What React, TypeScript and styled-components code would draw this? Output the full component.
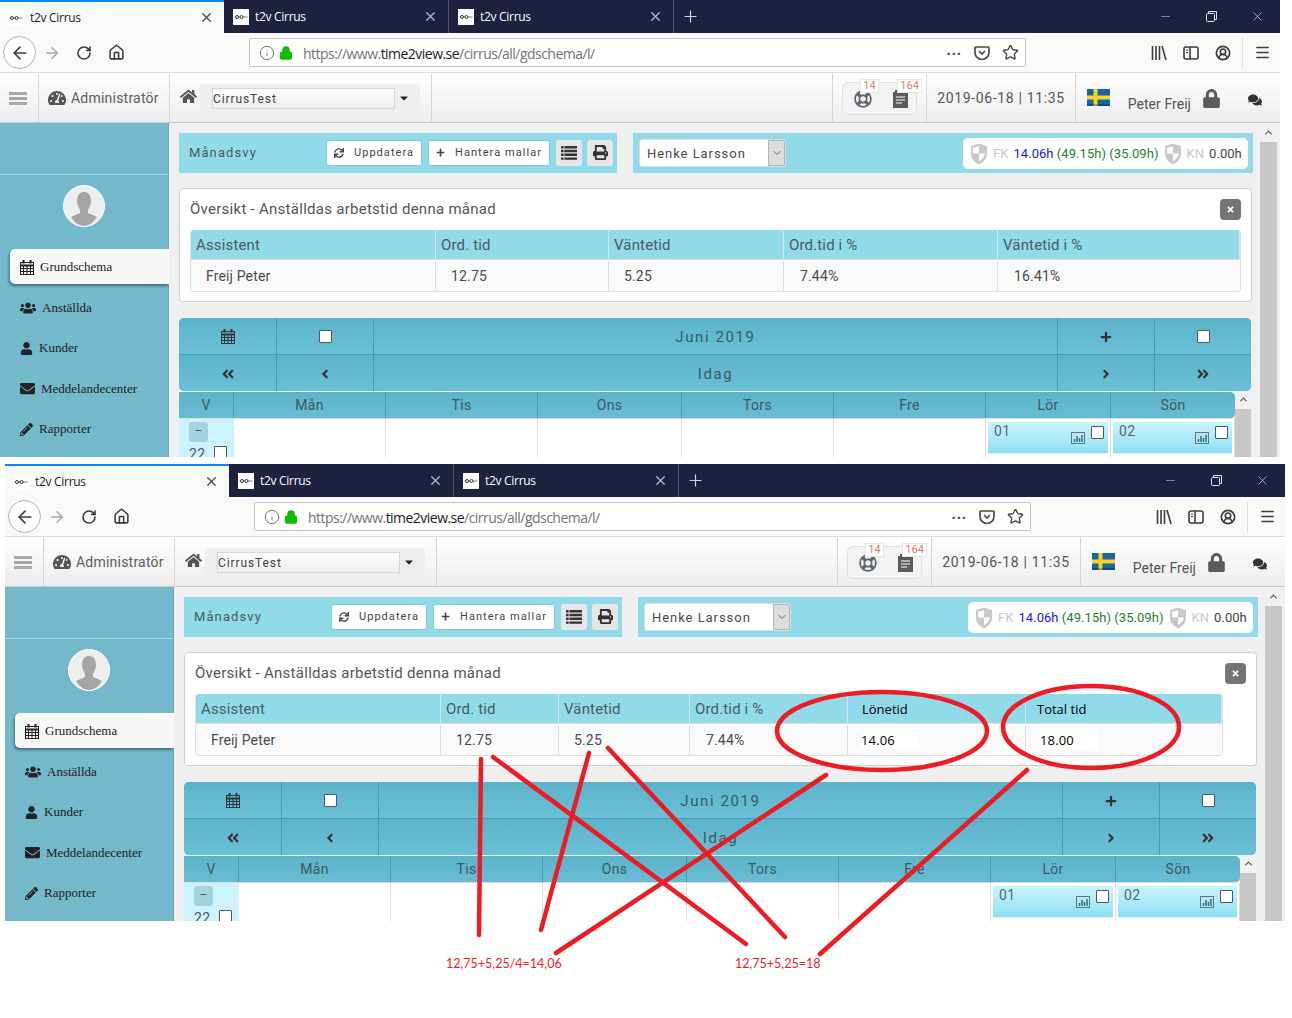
import React from "react";
import styled, { createGlobalStyle } from "styled-components";
import {
  FaAngleDoubleLeft, FaAngleDoubleRight, FaAngleLeft, FaAngleRight, FaCaretDown,
  FaComments, FaEnvelope, FaHome, FaLock, FaPencilAlt, FaPlus, FaPrint, FaRegLifeRing, FaSync,
  FaTachometerAlt, FaTimes, FaUser, FaUsers,
} from "react-icons/fa";
import {
  ArrowLeft, ArrowRight, ChevronDown, ChevronUp, CircleUserRound, Home, Info, Lock, Menu, Minus, Plus,
  RotateCw, Star, X,
} from "lucide-react";

const Global = createGlobalStyle`
  html, body { margin: 0; padding: 0; background: #fff; }
  body { font-family: Roboto, "Liberation Sans", sans-serif; }
  #root { position: relative; height: 1018px; overflow: hidden; }
  * { box-sizing: border-box; }
`;

const Shot = styled.div<{ $second?: boolean }>`
  width: 1280px;
  height: 457px;
  overflow: hidden;
  margin-left: ${(p) => (p.$second ? 5 : 0)}px;
  margin-top: ${(p) => (p.$second ? 7 : 0)}px;
  background: #fff;
`;

/* Browser chrome */
const TabBar = styled.div`
  display: flex;
  align-items: stretch;
  height: 33px;
  background: #1e2140;
  color: #fff;
`;
const Tab = styled.div<{ $active?: boolean }>`
  width: ${(p) => (p.$active ? 224 : 225)}px;
  display: flex;
  align-items: center;
  gap: 6px;
  padding: ${(p) => (p.$active ? "0 10px 0 8px" : "0 10px 0 9px")};
  font: 12px "Open Sans", "Liberation Sans", sans-serif;
  letter-spacing: -0.3px;
  color: ${(p) => (p.$active ? "#1a1a1a" : "#fff")};
  background: ${(p) => (p.$active ? "#f9f9fa" : "transparent")};
  border-top: ${(p) => (p.$active ? "2px solid #0a84ff" : "none")};
  border-right: ${(p) => (p.$active ? "none" : "1px solid #50536a")};
`;
const TabTitle = styled.span`
  flex: 1;
`;
const NewTab = styled.div`
  width: 32px;
  display: flex;
  align-items: center;
  justify-content: center;
  color: #d4d4da;
`;
const WinControls = styled.div`
  margin-left: auto;
  display: flex;
  align-items: center;
  color: #e6e6ea;
`;
const WinButton = styled.div`
  width: 46px;
  display: flex;
  justify-content: center;
`;
const NavBar = styled.div`
  height: 40px;
  display: flex;
  align-items: center;
  background: #f9f9fa;
  border-bottom: 1px solid #dcdcdf;
  color: #3d3d40;
`;
const BackCircle = styled.div`
  width: 33px;
  height: 33px;
  margin-left: 3px;
  border: 1px solid #b1b1b3;
  border-radius: 50%;
  background: #fff;
  display: flex;
  align-items: center;
  justify-content: center;
`;
const NavIcon = styled.div<{ $dim?: boolean; $w?: number }>`
  width: ${(p) => p.$w ?? 32}px;
  display: flex;
  justify-content: center;
  color: ${(p) => (p.$dim ? "#a8a8aa" : "#3d3d40")};
`;
const UrlBar = styled.div`
  width: 777px;
  height: 29px;
  margin-left: 117px;
  margin-right: 117px;
  background: #fff;
  border: 1px solid #c4c4c6;
  border-radius: 2px;
  display: flex;
  align-items: center;
  padding: 0 6px 0 9px;
  font: 14px "Open Sans", "Liberation Sans", sans-serif;
  letter-spacing: -0.53px;
  color: #737373;
`;
const UrlLock = styled.div`
  margin: 0 10px 0 4px;
  display: flex;
  color: #12bc00;
`;
const UrlText = styled.span`
  margin-top: 2px;
`;
const UrlHost = styled.span`
  color: #1a1a1a;
`;
const UrlIcons = styled.div`
  margin-left: auto;
  display: flex;
  align-items: center;
  gap: 12px;
  color: #4a4a4d;
`;
const Dots = styled.span`
  font: bold 15px "Liberation Sans", sans-serif;
  letter-spacing: 1px;
  line-height: 10px;
  margin-top: -6px;
`;
const NavDivider = styled.div`
  width: 1px;
  height: 30px;
  background: #dcdcdf;
  margin: 0 3px;
`;

/* App header */
const AppHeader = styled.div`
  height: 50px;
  padding-top: 1px;
  display: flex;
  background: linear-gradient(#ffffff, #ececec);
  border-bottom: 1px solid #c8c8c8;
  color: #555;
`;
const HeadSection = styled.div<{ $w?: number; $right?: boolean; $pad?: number }>`
  ${(p) => (p.$w ? `width: ${p.$w}px;` : "")}
  padding-left: ${(p) => p.$pad ?? 0}px;
  display: flex;
  align-items: center;
  border-right: 1px solid #d5d5d5;
  ${(p) => (p.$right ? "border-left: 1px solid #d5d5d5; border-right: none;" : "")}
`;
const Hamburger = styled.div`
  width: 18px;
  height: 13px;
  margin-left: 9px;
  border-top: 3px solid #a5a9ae;
  border-bottom: 3px solid #a5a9ae;
  position: relative;
  &::after {
    content: "";
    position: absolute;
    left: 0;
    right: 0;
    top: 2px;
    height: 3px;
    background: #a5a9ae;
  }
`;
const RoleLabel = styled.span`
  font-size: 14px;
  letter-spacing: 0.22px;
  margin-left: 5px;
  color: #5e5e5e;
`;
const HomeGlyph = styled.span`
  display: flex;
  margin-top: -4px;
  color: #555;
`;
const SelectWrap = styled.div`
  width: 220px;
  height: 28px;
  margin-left: 3px;
  background: #eeeeee;
  border-radius: 4px;
  display: flex;
  align-items: center;
  padding: 0 10px 0 12px;
  justify-content: space-between;
`;
const SelectBox = styled.div`
  width: 183px;
  height: 21px;
  background: linear-gradient(#fff, #ededed);
  border: 1px solid #d5d5d5;
  font-size: 12px;
  letter-spacing: 0.9px;
  line-height: 20px;
  color: #444;
`;
const Spacer = styled.div`
  flex: 1;
`;
const AlertBox = styled.div`
  position: relative;
  width: 75px;
  height: 33px;
  margin: 0 9px;
  border: 1px solid #dfdfdf;
  border-radius: 6px;
  background: #f3f3f3;
  display: flex;
  align-items: center;
  padding: 2px 0 0 11px;
  gap: 21px;
  color: #5f6870;
`;
const Badge = styled.span<{ $left: number }>`
  position: absolute;
  top: -4px;
  left: ${(p) => p.$left}px;
  height: 14px;
  padding: 0 2px;
  background: #fff;
  border: 1px solid #e4e4e4;
  font-size: 11px;
  line-height: 12px;
  color: #d97e72;
`;
const DateText = styled.span`
  font-size: 14px;
  letter-spacing: 0.64px;
  padding: 0 10px;
  color: #555;
  margin-top: -1px;
`;
const UserName = styled.span`
  font-size: 14px;
  letter-spacing: 0.05px;
  margin: 12px 11px 0 18px;
  color: #555;
`;
const LockIcon = styled.div`
  display: flex;
  margin-top: 0;
  color: #5b5b5b;
`;
const ChatIcon = styled.div`
  display: flex;
  margin: 4px 18px 0 27px;
  color: #333;
`;

/* Body */
const Body = styled.div`
  display: grid;
  grid-template-columns: 169px 1fr;
  height: 400px;
`;
const Sidebar = styled.div`
  background: #74b8cb;
  height: 100%;
  border-right: 1px solid #6aa9bb;
`;
const SideTop = styled.div`
  height: 52px;
  border-bottom: 1px solid #a4dbe8;
`;
const AvatarWrap = styled.div`
  display: flex;
  justify-content: center;
  padding: 10px 0 22px;
  height: 74px;
`;
const Avatar = styled.svg`
  width: 42px;
  height: 42px;
  display: block;
`;
const SideItem = styled.div<{ $active?: boolean }>`
  height: 35px;
  margin: 0 0 5.5px 10px;
  padding: 1px 0 0 10px;
  display: flex;
  align-items: center;
  gap: 6px;
  font: 13px "Liberation Serif", serif;
  color: #222;
  ${(p) =>
    p.$active
      ? `background: #f8f8f8; border-radius: 5px 0 0 5px; box-shadow: -1px 2px 3px #3a6f80; margin-right: -1px;`
      : ""}
`;
const Main = styled.div`
  display: flex;
  background: #efefef;
  height: 100%;
`;
const Content = styled.div`
  width: 1091px;
  padding: 10px 8px 0 10px;
`;
const ToolRow = styled.div`
  display: flex;
  gap: 16px;
  margin-right: -1px;
`;
const Toolbar = styled.div<{ $w: number }>`
  width: ${(p) => p.$w}px;
  height: 40px;
  background: #90daea;
  display: flex;
  align-items: center;
  padding: 0 0 0 6px;
`;
const ViewTitle = styled.span`
  flex: none;
  margin: -2px 0 0 4px;
  font-size: 13px;
  letter-spacing: 1.1px;
  color: #4a5a60;
  width: 137px;
`;
const ToolButton = styled.div<{ $w: number }>`
  flex: none;
  width: ${(p) => p.$w}px;
  height: 26px;
  margin: -1px 6px 0 0;
  background: #fff;
  border: 1px solid #7fd0cf;
  border-radius: 3px;
  display: flex;
  align-items: center;
  justify-content: center;
  gap: 10px;
  font-size: 11px;
  letter-spacing: 1.05px;
  color: #444;
`;
const IconButton = styled.div`
  flex: none;
  width: 26px;
  height: 26px;
  margin: -1px 5px 0 0;
  background: #e6e6e6;
  border-radius: 3px;
  display: flex;
  align-items: center;
  justify-content: center;
  color: #333;
`;
const PersonSelect = styled.div`
  width: 147px;
  height: 28px;
  background: #fff;
  border: 1px solid #dcdcdc;
  border-radius: 3px;
  display: flex;
  align-items: center;
  justify-content: space-between;
  padding-left: 7px;
  font-size: 13px;
  letter-spacing: 0.95px;
  color: #4a4a4a;
`;
const SelectArrow = styled.div`
  width: 17px;
  height: 100%;
  background: #dcdcdc;
  border: 1px solid #b5b5b5;
  border-radius: 0 2px 2px 0;
  display: flex;
  align-items: center;
  justify-content: center;
  color: #666;
`;
const StatsPill = styled.div`
  margin: 1px 5px 0 auto;
  width: 285px;
  height: 31px;
  background: #fff;
  border-radius: 5px;
  display: flex;
  align-items: center;
  padding-left: 7px;
  gap: 5px;
  font-size: 13px;
  letter-spacing: 0.05px;
  color: #444;
  white-space: nowrap;
`;
const StatDim = styled.span`
  color: #c8c8c8;
`;
const StatBlue = styled.span`
  color: #1a1ae0;
`;
const StatGreen = styled.span`
  color: #1e7f2f;
`;
const Panel = styled.div`
  margin-top: 15px;
  height: 114px;
  background: #fff;
  border: 1px solid #cfcfcf;
  border-radius: 4px;
  padding: 10px 10px 0;
`;
const PanelHead = styled.div`
  height: 31px;
  display: flex;
  justify-content: space-between;
  font-size: 15px;
  letter-spacing: 0.27px;
  color: #555;
  line-height: 20px;
`;
const CloseBtn = styled.div`
  width: 21px;
  height: 21px;
  background: #757575;
  border-radius: 4px;
  color: #fff;
  display: flex;
  align-items: center;
  justify-content: center;
`;
const DataTable = styled.div<{ $cols: string; $w: number }>`
  width: ${(p) => p.$w}px;
  display: grid;
  grid-template-columns: ${(p) => p.$cols};
  grid-template-rows: 30px 31px;
  border-radius: 4px;
  overflow: hidden;
  border: 1px solid #dedede;
  border-top: none;
`;
const HeadCell = styled.div<{ $pad?: number; $edited?: boolean }>`
  background: #90daea;
  border-right: 1px solid #cfe6ea;
  padding-left: ${(p) => p.$pad ?? 5}px;
  font: ${(p) => (p.$edited ? `13px "Open Sans"` : "15px Roboto")}, sans-serif;
  color: ${(p) => (p.$edited ? "#000" : "#4a5a60")};
  line-height: 30px;
  letter-spacing: ${(p) => (p.$edited ? "0" : "0.15px")};
  border-bottom: 1px solid #dedede;
  &:last-child { border-right: none; }
`;
const BodyCell = styled.div<{ $pad?: number; $edited?: boolean }>`
  background: #fafafa;
  border-right: 1px solid #dedede;
  padding-left: ${(p) => p.$pad ?? 15}px;
  font: ${(p) => (p.$edited ? `13px "Open Sans"` : "14px Roboto")}, sans-serif;
  color: ${(p) => (p.$edited ? "#000" : "#4a4a4a")};
  line-height: 32px;
  letter-spacing: 0.15px;
  &:last-child { border-right: none; }
`;
const EditedValue = styled.span`
  display: inline-block;
  width: 58px;
  line-height: 18px;
  margin-top: 1px;
  background: #fff;
`;
const Calendar = styled.div`
  margin-top: 16px;
  width: 1072px;
`;
const CalNav = styled.div`
  display: grid;
  grid-template-columns: 98px 97px 684px 97px 96px;
  grid-template-rows: 37px 36px;
  border-radius: 5px;
  overflow: hidden;
  background: #64b9cf;
`;
const NavCell = styled.div<{ $row2?: boolean; $last?: boolean }>`
  display: flex;
  align-items: center;
  justify-content: center;
  padding-top: 1px;
  background: linear-gradient(#5bb3ca, #6ac0d6);
  border-right: ${(p) => (p.$last ? "none" : "1px solid #4a9bb0")};
  border-bottom: ${(p) => (p.$row2 ? "none" : "1px solid #4a9bb0")};
  font-size: 15px;
  letter-spacing: 1.6px;
  color: #3f5a63;
`;
const IconInk = styled.span`
  display: flex;
  color: #333;
`;
const Check = styled.span<{ $s?: number }>`
  display: block;
  width: ${(p) => p.$s ?? 13}px;
  height: ${(p) => p.$s ?? 13}px;
  background: #fff;
  border: 1px solid #555;
  border-radius: 1px;
`;
const CalLower = styled.div`
  display: flex;
  margin-top: 1px;
`;
const CalGridWrap = styled.div`
  width: 1056px;
`;
const WEEK_COLS = "55px 152px 152px 144px 152px 152px 125px 124px";
const DayHead = styled.div`
  display: grid;
  grid-template-columns: ${WEEK_COLS};
  height: 27px;
  border-radius: 0 5px 5px 0;
  overflow: hidden;
  border-bottom: 1px solid #dcdcdc;
`;
const DayCell = styled.div`
  background: linear-gradient(#5bb3ca, #67bcd3);
  border-right: 1px solid #4a9bb0;
  text-align: center;
  font-size: 14px;
  line-height: 26px;
  letter-spacing: 0.3px;
  color: #3f5a63;
  &:last-child { border-right: none; }
`;
const WeekRow = styled.div`
  display: grid;
  grid-template-columns: ${WEEK_COLS};
  height: 60px;
`;
const WeekCell = styled.div`
  background: #fff;
  border-right: 1px solid #dcdcdc;
`;
const WeekNoCell = styled.div`
  background: #cdf3fe;
  padding: 3px 0 0 10px;
`;
const Collapse = styled.div`
  width: 19px;
  height: 20px;
  background: #a4d3e0;
  border-radius: 3px;
  text-align: center;
  line-height: 19px;
  font-size: 12px;
  color: #555;
`;
const WeekNo = styled.div`
  display: flex;
  align-items: flex-start;
  gap: 8px;
  margin-top: 4px;
  font-size: 14px;
  letter-spacing: 0.5px;
  color: #4a5a60;
`;
const DayBox = styled.div`
  position: relative;
  margin: 3px 2px 0 2px;
  height: 32px;
  background: linear-gradient(#ccf4ff, #8fdff4);
  border-bottom: 1px solid #dff5fb;
  padding: 1px 0 0 6px;
  font-size: 14px;
  letter-spacing: 0.5px;
  color: #4f6b75;
`;
const DayIcon = styled.svg`
  position: absolute;
  right: 23px;
  top: 10px;
  width: 14px;
  height: 12px;
`;
const DayCheck = styled.span`
  position: absolute;
  right: 4px;
  top: 4px;
`;
const Scroll = styled.div<{ $w: number; $thumbTop: number; $thumbW: number }>`
  width: ${(p) => p.$w}px;
  background: #f0f0f0;
  position: relative;
  display: flex;
  justify-content: center;
  color: #555;
  padding-top: ${(p) => p.$thumbTop - 15}px;
  &::after {
    content: "";
    position: absolute;
    top: ${(p) => p.$thumbTop}px;
    bottom: 0;
    left: 0;
    width: ${(p) => p.$thumbW}px;
    background: #c8c8c8;
  }
`;
const ScrollArrow = styled.span<{ $shift?: number }>`
  display: flex;
  margin-right: ${(p) => p.$shift ?? 0}px;
`;
const Overlay = styled.svg`
  position: absolute;
  inset: 0;
  width: 1292px;
  height: 1018px;
  pointer-events: none;
`;
const Note = styled.span<{ $x: number }>`
  position: absolute;
  left: ${(p) => p.$x}px;
  top: 956px;
  font: 12.5px Lato, sans-serif;
  color: #ed1c24;
  line-height: 16px;
`;
const FlagMark = styled.svg`
  margin: -2px 0 0 11px;
`;

const Favicon = () => (
  <svg width="20" height="20" viewBox="0 0 20 20" style={{ margin: "0 -2px" }}>
    <rect x="2" y="2" width="16" height="16" fill="#fff" />
    <path d="M3.500 10h13" stroke="#555" strokeWidth=".8" />
    <rect x="4.500" y="8.500" width="3" height="3" rx="1.500" fill="#fff" stroke="#333" />
    <rect x="9" y="8.500" width="3" height="3" rx="1.500" fill="#fff" stroke="#333" />
  </svg>
);
const Flag = () => (
  <FlagMark width="23" height="17" viewBox="0 0 23 17">
    <rect width="23" height="17" fill="#1565a8" />
    <rect x="6.500" width="4" height="17" fill="#f5d327" />
    <rect y="6.500" width="23" height="4" fill="#f5d327" />
    <rect y="15" width="23" height="2" fill="#000" opacity=".25" />
  </FlagMark>
);
const Shield = () => (
  <svg width="18" height="22" viewBox="0 0 18 22">
    <path d="M9 0.500 1 3v8c0 5 4 8.500 8 10.500 4-2 8-5.500 8-10.500V3z" fill="#c9c9c9" />
    <path d="M9 3.500v7H3.200V4.500zM9 10.500h5.800c-.3 3.500-2.900 6-5.800 7.700z" fill="#fff" />
  </svg>
);
const PocketIcon = () => (
  <svg width="16" height="16" viewBox="0 0 16 16" fill="none" stroke="#4a4a4d" strokeWidth="1.700">
    <path d="M2 2h12a1 1 0 0 1 1 1v4.500a7 7 0 0 1-14 0V3a1 1 0 0 1 1-1z" />
    <path d="M5 6l3 3 3-3" />
  </svg>
);
const LibraryIcon = () => (
  <svg width="16" height="16" viewBox="0 0 16 16" stroke="#3d3d40" strokeWidth="1.600" fill="none">
    <path d="M1.500 1v14M5 1v14M8.500 1v14M11 1l4 14" />
  </svg>
);
const SidebarIcon = () => (
  <svg width="16" height="16" viewBox="0 0 16 16" stroke="#3d3d40" strokeWidth="1.600" fill="none">
    <rect x="1" y="2" width="14" height="12" rx="2" />
    <path d="M7 2v12" />
    <path d="M3 5h2M3 7.500h2" strokeWidth="1" />
  </svg>
);
const RestoreIcon = () => (
  <svg width="11" height="11" viewBox="0 0 11 11" stroke="#e6e6ea" fill="none">
    <rect x=".5" y="2.500" width="8" height="8" rx="1" />
    <path d="M2.500 2.500V.5h8v8H8.500" />
  </svg>
);
const NotesIcon = () => (
  <svg width="15" height="18" viewBox="0 0 15 18">
    <path d="M0 2h2V0h2v2h2V0h2v2h2V0h2v2h3v16H0z" fill="#5b5b5b" />
    <path d="M3 7h9M3 10h9M3 13h6" stroke="#fff" />
  </svg>
);
const CalendarIcon = () => (
  <svg width="14" height="15" viewBox="0 0 14 15" fill="none" stroke="currentColor">
    <rect x=".5" y="2.500" width="13" height="12" fill="none" />
    <path d="M.5 5.500h13" strokeWidth="2" />
    <path d="M.5 8.500h13M.5 11.500h13M3.500 5v10M7 5v10M10.500 5v10" />
    <path d="M3.500 0v3.500M10.500 0v3.500" strokeWidth="2" />
  </svg>
);
const ListIcon = () => (
  <svg width="16" height="14" viewBox="0 0 16 14" fill="currentColor">
    <path d="M0 0h16v2.400H0zM0 3.800h16v2.400H0zM0 7.600h16V10H0zM0 11.400h16v2.400H0z" />
    <path d="M3 0v14" stroke="#e6e6e6" strokeWidth=".8" />
  </svg>
);
const ChartBox = () => (
  <DayIcon viewBox="0 0 14 12">
    <rect x=".5" y=".5" width="13" height="11" fill="#b9e6f2" stroke="#4d7f90" />
    <path d="M3.500 10V7M6 10V4M8.500 10V6M11 10V3" stroke="#2f6d82" strokeWidth="1.500" />
  </DayIcon>
);

type Col = { head: string; value: string; headPad?: number; pad?: number; edited?: boolean };

const SIDE_ITEMS: [React.ReactNode, string][] = [
  [<FaUsers size={16} />, "Anställda"],
  [<FaUser size={13} />, "Kunder"],
  [<FaEnvelope size={15} />, "Meddelandecenter"],
  [<FaPencilAlt size={13} />, "Rapporter"],
];
const DAYS = ["V", "Mån", "Tis", "Ons", "Tors", "Fre", "Lör", "Sön"];

const Window = ({ second, cols, template, width }: { second?: boolean; cols: Col[]; template: string; width: number }) => (
  <Shot $second={second}>
    <TabBar>
      <Tab $active>
        <Favicon />
        <TabTitle>t2v Cirrus</TabTitle>
        <X size={15} color="#4a4a4d" />
      </Tab>
      <Tab>
        <Favicon />
        <TabTitle>t2v Cirrus</TabTitle>
        <X size={15} color="#b8b8c0" />
      </Tab>
      <Tab>
        <Favicon />
        <TabTitle>t2v Cirrus</TabTitle>
        <X size={15} color="#b8b8c0" />
      </Tab>
      <NewTab><Plus size={19} strokeWidth={1.5} /></NewTab>
      <WinControls>
        <WinButton><Minus size={13} strokeWidth={1} /></WinButton>
        <WinButton><RestoreIcon /></WinButton>
        <WinButton><X size={15} strokeWidth={1} /></WinButton>
      </WinControls>
    </TabBar>
    <NavBar>
      <BackCircle><ArrowLeft size={20} strokeWidth={2} /></BackCircle>
      <NavIcon $dim><ArrowRight size={18} /></NavIcon>
      <NavIcon><RotateCw size={16} strokeWidth={2.4} /></NavIcon>
      <NavIcon><Home size={17} strokeWidth={2.2} /></NavIcon>
      <UrlBar>
        <Info size={16} strokeWidth={1.5} />
        <UrlLock><Lock size={14} strokeWidth={3} fill="#12bc00" /></UrlLock>
        <UrlText>https://www.<UrlHost>time2view.se</UrlHost>/cirrus/all/gdschema/l/</UrlText>
        <UrlIcons>
          <Dots>...</Dots>
          <PocketIcon />
          <Star size={17} strokeWidth={2} />
        </UrlIcons>
      </UrlBar>
      <NavIcon $w={32}><LibraryIcon /></NavIcon>
      <NavIcon $w={32}><SidebarIcon /></NavIcon>
      <NavIcon $w={32}><CircleUserRound size={16} strokeWidth={2.5} /></NavIcon>
      <NavDivider />
      <NavIcon $w={32}><Menu size={17} strokeWidth={2} /></NavIcon>
    </NavBar>
    <AppHeader>
      <HeadSection $w={39}><Hamburger /></HeadSection>
      <HeadSection $w={131} $pad={9}>
        <FaTachometerAlt size={18} color="#555" />
        <RoleLabel>Administratör</RoleLabel>
      </HeadSection>
      <HeadSection $w={262} $pad={10}>
        <HomeGlyph><FaHome size={17} /></HomeGlyph>
        <SelectWrap>
          <SelectBox>CirrusTest</SelectBox>
          <FaCaretDown size={12} color="#222" />
        </SelectWrap>
      </HeadSection>
      <Spacer />
      <HeadSection $right>
        <AlertBox>
          <FaRegLifeRing size={18} />
          <NotesIcon />
          <Badge $left={17}>14</Badge>
          <Badge $left={54}>164</Badge>
        </AlertBox>
      </HeadSection>
      <HeadSection $right><DateText>2019-06-18 | 11:35</DateText></HeadSection>
      <HeadSection $right>
        <Flag />
        <UserName>Peter Freij</UserName>
        <LockIcon><FaLock size={19} /></LockIcon>
        <ChatIcon><FaComments size={14} /></ChatIcon>
      </HeadSection>
    </AppHeader>
    <Body>
      <Sidebar>
        <SideTop />
        <AvatarWrap>
          <Avatar viewBox="0 0 42 42">
            <circle cx="21" cy="21" r="20.500" fill="#eee" stroke="#fff" />
            <path d="M21 7c5 0 7 4 7 9 0 4-2 7-3 9v3l9 4c-3 5-8 9-13 9s-10-4-13-9l9-4v-3c-1-2-3-5-3-9 0-5 2-9 7-9z" fill="#a5a5a5" />
          </Avatar>
        </AvatarWrap>
        <SideItem $active><CalendarIcon />Grundschema</SideItem>
        {SIDE_ITEMS.map(([icon, label]) => (
          <SideItem key={label}>{icon}{label}</SideItem>
        ))}
      </Sidebar>
      <Main>
        <Content>
          <ToolRow>
            <Toolbar $w={438}>
              <ViewTitle>Månadsvy</ViewTitle>
              <ToolButton $w={96}><FaSync size={10} />Uppdatera</ToolButton>
              <ToolButton $w={122}><FaPlus size={9} />Hantera mallar</ToolButton>
              <IconButton><ListIcon /></IconButton>
              <IconButton><FaPrint size={15} /></IconButton>
            </Toolbar>
            <Toolbar $w={620}>
              <PersonSelect>
                Henke Larsson
                <SelectArrow><ChevronDown size={12} /></SelectArrow>
              </PersonSelect>
              <StatsPill>
                <Shield />
                <StatDim>FK</StatDim>
                <span><StatBlue>14.06h</StatBlue> <StatGreen>(49.15h) (35.09h)</StatGreen></span>
                <Shield />
                <StatDim>KN</StatDim>
                <span>0.00h</span>
              </StatsPill>
            </Toolbar>
          </ToolRow>
          <Panel>
            <PanelHead>
              <span>Översikt - Anställdas arbetstid denna månad</span>
              <CloseBtn><FaTimes size={9} /></CloseBtn>
            </PanelHead>
            <DataTable $cols={template} $w={width}>
              {cols.map((c) => (
                <HeadCell key={c.head} $pad={c.headPad} $edited={c.edited}>{c.head}</HeadCell>
              ))}
              {cols.map((c) => (
                <BodyCell key={c.head} $pad={c.pad} $edited={c.edited}>
                  {c.edited ? <EditedValue>{c.value}</EditedValue> : c.value}
                </BodyCell>
              ))}
            </DataTable>
          </Panel>
          <Calendar>
            <CalNav>
              <NavCell><IconInk><CalendarIcon /></IconInk></NavCell>
              <NavCell><Check /></NavCell>
              <NavCell>Juni 2019</NavCell>
              <NavCell><IconInk><FaPlus size={12} /></IconInk></NavCell>
              <NavCell $last><Check /></NavCell>
              <NavCell $row2><IconInk><FaAngleDoubleLeft size={14} /></IconInk></NavCell>
              <NavCell $row2><IconInk><FaAngleLeft size={14} /></IconInk></NavCell>
              <NavCell $row2>Idag</NavCell>
              <NavCell $row2><IconInk><FaAngleRight size={14} /></IconInk></NavCell>
              <NavCell $row2 $last><IconInk><FaAngleDoubleRight size={14} /></IconInk></NavCell>
            </CalNav>
            <CalLower>
              <CalGridWrap>
                <DayHead>
                  {DAYS.map((d) => <DayCell key={d}>{d}</DayCell>)}
                </DayHead>
                <WeekRow>
                  <WeekNoCell>
                    <Collapse>–</Collapse>
                    <WeekNo>22 <Check /></WeekNo>
                  </WeekNoCell>
                  <WeekCell />
                  <WeekCell />
                  <WeekCell />
                  <WeekCell />
                  <WeekCell />
                  <WeekCell>
                    <DayBox>01<ChartBox /><DayCheck><Check /></DayCheck></DayBox>
                  </WeekCell>
                  <WeekCell>
                    <DayBox>02<ChartBox /><DayCheck><Check /></DayCheck></DayBox>
                  </WeekCell>
                </WeekRow>
              </CalGridWrap>
              <Scroll $w={16} $thumbTop={17} $thumbW={16}><ChevronUp size={11} strokeWidth={2.5} /></Scroll>
            </CalLower>
          </Calendar>
        </Content>
        <Scroll $w={20} $thumbTop={19} $thumbW={17}>
          <ScrollArrow $shift={3}><ChevronUp size={11} strokeWidth={2.5} /></ScrollArrow>
        </Scroll>
      </Main>
    </Body>
  </Shot>
);

const FIRST: Col[] = [
  { head: "Assistent", value: "Freij Peter" },
  { head: "Ord. tid", value: "12.75" },
  { head: "Väntetid", value: "5.25" },
  { head: "Ord.tid i %", value: "7.44%", pad: 16 },
  { head: "Väntetid i %", value: "16.41%", pad: 16 },
];
const SECOND: Col[] = [
  { head: "Assistent", value: "Freij Peter" },
  { head: "Ord. tid", value: "12.75" },
  { head: "Väntetid", value: "5.25" },
  { head: "Ord.tid i %", value: "7.44%", pad: 16 },
  { head: "Lönetid", value: "14.06", headPad: 14, pad: 13, edited: true },
  { head: "Total tid", value: "18.00", headPad: 11, pad: 14, edited: true },
];

const STROKES: [number, number, number, number][] = [
  [481, 759, 479, 935],
  [493, 757, 746, 944],
  [589, 753, 541, 930],
  [608, 748, 785, 937],
  [826, 775, 556, 953],
  [1027, 770, 820, 954],
];

export default function App() {
  return (
    <>
      <Global />
      <Window cols={FIRST} template="245px 173px 175px 214px 1fr" width={1051} />
      <Window second cols={SECOND} template="245px 118px 131px 158px 178px 1fr" width={1028} />
      <Overlay viewBox="0 0 1292 1018" fill="none" stroke="#ed1c24" strokeWidth="4.500" strokeLinecap="round">
        {STROKES.map(([x1, y1, x2, y2]) => (
          <line key={x1} x1={x1} y1={y1} x2={x2} y2={y2} />
        ))}
        <ellipse cx="882" cy="731" rx="105" ry="39" />
        <ellipse cx="1091" cy="727" rx="88" ry="41" />
      </Overlay>
      <Note $x={446}>12,75+5,25/4=14,06</Note>
      <Note $x={735}>12,75+5,25=18</Note>
    </>
  );
}
